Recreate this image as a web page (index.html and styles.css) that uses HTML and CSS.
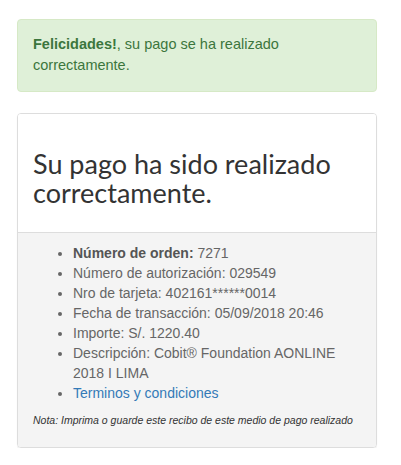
FILE: index.html
```html
<!DOCTYPE html>
<html lang="es">
<head>
<meta charset="utf-8">
<title>Pago realizado</title>
<link rel="stylesheet" href="styles.css">
</head>
<body>
<div class="container">
  <div class="alert">
    <strong>Felicidades!</strong>, su pago se ha realizado correctamente.
  </div>
  <div class="panel">
    <div class="panel-heading">
      <h3 class="title">Su pago ha sido realizado correctamente.</h3>
    </div>
    <div class="panel-body">
      <ul class="details">
        <li><strong>Número de orden:</strong> 7271</li>
        <li>Número de autorización: 029549</li>
        <li>Nro de tarjeta: 402161******0014</li>
        <li>Fecha de transacción: 05/09/2018 20:46</li>
        <li>Importe: S/. 1220.40</li>
        <li>Descripción: Cobit® Foundation AONLINE 2018 I LIMA</li>
        <li><a class="link" href="#">Terminos y condiciones</a></li>
      </ul>
      <p class="note">Nota: Imprima o guarde este recibo de este medio de pago realizado</p>
    </div>
  </div>
</div>
</body>
</html>
```
FILE: styles.css
```css
html, body {
  margin: 0;
  padding: 0;
  background: #fff;
}
body {
  font-family: "Liberation Sans", Arial, sans-serif;
  font-size: 14px;
  line-height: 20px;
  color: #333;
}
.container {
  padding: 19px 24px 0 17px;
}
.alert {
  background: #dff0d8;
  border: 1px solid #d6e9c6;
  border-radius: 4px;
  color: #3c763d;
  padding: 14px 15px 15px;
  font-size: 14.5px;
  line-height: 21px;
  margin-bottom: 21px;
}
.alert strong {
  font-weight: bold;
}
.panel {
  border: 1px solid #ddd;
  border-radius: 4px;
  box-shadow: 0 1px 1px rgba(0,0,0,0.08);
  overflow: hidden;
}
.panel-heading {
  background: #fff;
  padding: 15px 15px 15px;
  border-bottom: 1px solid #ddd;
}
.title {
  margin: 20px 0 10px;
  font-family: Lato, "Open Sans", sans-serif;
  font-weight: 400;
  font-size: 27px;
  line-height: 29px;
  color: #333;
}
.panel-body {
  background: #f4f4f4;
  padding: 10px 15px 20px;
}
.details {
  margin: 0 0 10px;
  padding-left: 40px;
  color: #666;
}
.details strong {
  color: #555;
}
.link {
  color: #337ab7;
  text-decoration: none;
}
.note {
  margin: 0;
  font-size: 10.5px;
  font-style: italic;
  line-height: 14px;
  color: #333;
}
```
